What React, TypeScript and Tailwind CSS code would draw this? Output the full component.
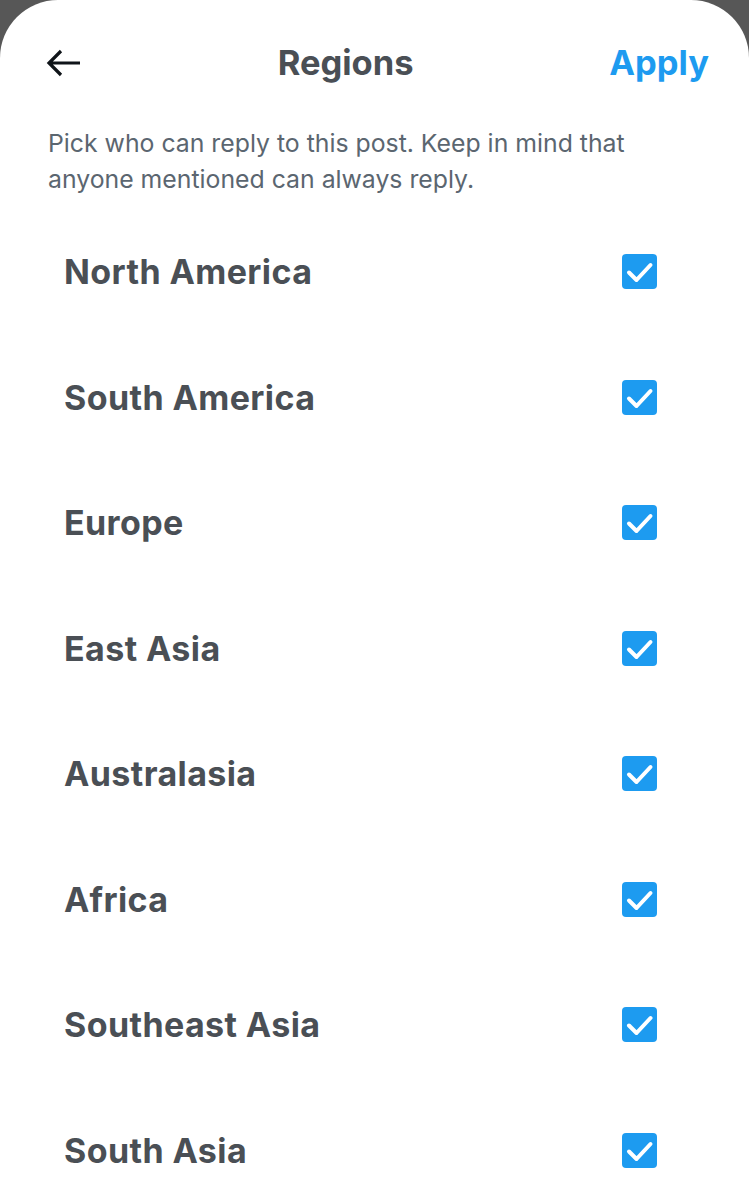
const regions = [
  "North America",
  "South America",
  "Europe",
  "East Asia",
  "Australasia",
  "Africa",
  "Southeast Asia",
  "South Asia",
];

const BackArrow = () => (
  <svg width="36" height="30" viewBox="0 0 36 30" fill="none">
    <path
      d="M34 15H3M15 3L3 15l12 12"
      stroke="#0f1419"
      strokeWidth="3.2"
      strokeLinecap="butt"
    />
  </svg>
);

const CheckBox = () => (
  <span className="flex w-[35px] h-[35px] rounded-[4px] bg-[#1d9bf0]">
    <svg width="35" height="35" viewBox="0 0 35 35" fill="none">
      <path
        d="M7 18.5l7.5 7.5L28.5 11"
        stroke="#fff"
        strokeWidth="4"
        strokeLinecap="round"
        strokeLinejoin="round"
      />
    </svg>
  </span>
);

const App = () => {
  return (
    <div className="min-h-[1200px] bg-[#575757] font-['Inter',sans-serif]">
      <div className="min-h-[1200px] bg-white rounded-t-[58px] overflow-hidden">
        <div className="flex items-center h-[126px] pl-[46px] pr-[40px]">
          <BackArrow />
          <h1 className="flex-1 text-center text-[34.5px] font-bold text-[#4a4f55]">
            Regions
          </h1>
          <button className="text-[34.5px] font-bold text-[#1d9bf0]">
            Apply
          </button>
        </div>

        <p className="px-[48px] text-[24.8px] leading-[35.5px] text-[#5b6670]">
          Pick who can reply to this post. Keep in mind that anyone mentioned
          can always reply.
        </p>

        <ul className="mt-[12px]">
          {regions.map((r) => (
            <li
              key={r}
              className="flex items-center justify-between h-[125.5px] pl-[64px] pr-[92px]"
            >
              <span className="text-[34px] font-bold tracking-[0.4px] text-[#4a4f55]">
                {r}
              </span>
              <CheckBox />
            </li>
          ))}
        </ul>
      </div>
    </div>
  );
};

export default App;
